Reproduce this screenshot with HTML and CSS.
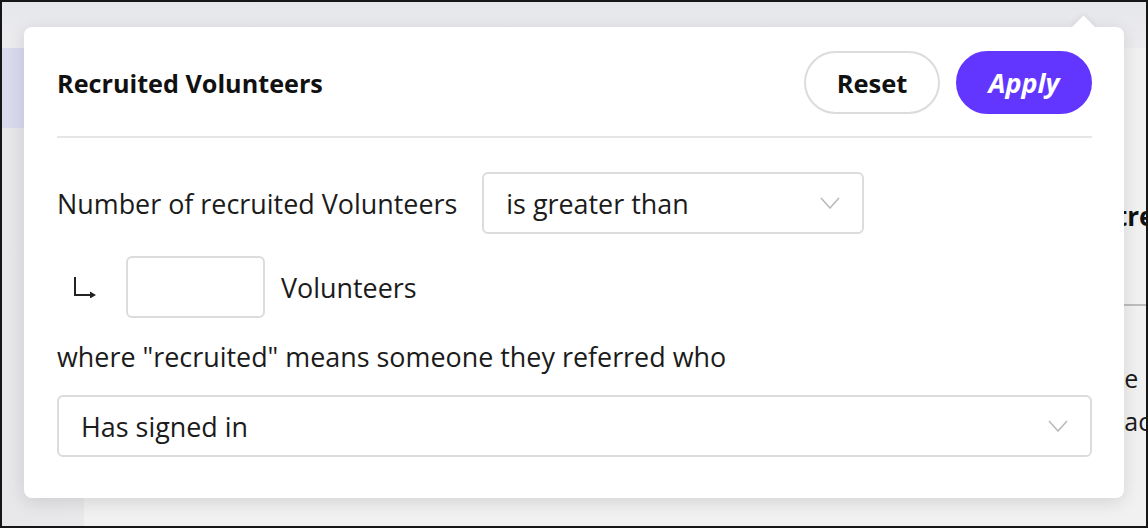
FILE: index.html
```html
<!DOCTYPE html>
<html lang="en">
<head>
<meta charset="utf-8">
<title>Recruited Volunteers filter</title>
<link rel="stylesheet" href="styles.css">
</head>
<body>
<div class="frame">
  <div class="bg">
    <div class="bg-top"></div>
    <div class="bg-body">
      <div class="bg-side"><div class="bg-side-active"></div></div>
      <div class="bg-main">
        <div class="bg-col">
          <div class="bg-heading">Centre</div>
          <div class="bg-rule"></div>
          <div class="bg-text">de<br>dac</div>
        </div>
      </div>
    </div>
  </div>

  <div class="popover">
    <div class="caret"></div>
    <div class="pop-head">
      <h2 class="pop-title">Recruited Volunteers</h2>
      <div class="pop-actions">
        <button class="btn btn-reset" type="button">Reset</button>
        <button class="btn btn-apply" type="button">Apply</button>
      </div>
    </div>
    <div class="pop-body">
      <div class="row row-cond">
        <span class="label">Number of recruited Volunteers</span>
        <div class="select select-op">
          <span>is greater than</span>
          <svg class="chev" width="20" height="12" viewBox="0 0 20 12"><polyline points="1,1 10,11 19,1" fill="none" stroke="#b8b8b8" stroke-width="1.5"/></svg>
        </div>
      </div>
      <div class="row row-count">
        <svg class="arrow" width="24" height="22" viewBox="0 0 24 22"><path d="M2 1 V19 H18" fill="none" stroke="#222" stroke-width="2"/><polygon points="17,15.5 23,19 17,22.5" fill="#222"/></svg>
        <div class="num-input"></div>
        <span class="label">Volunteers</span>
      </div>
      <p class="where">where "recruited" means someone they referred who</p>
      <div class="select select-full">
        <span>Has signed in</span>
        <svg class="chev" width="20" height="12" viewBox="0 0 20 12"><polyline points="1,1 10,11 19,1" fill="none" stroke="#b8b8b8" stroke-width="1.5"/></svg>
      </div>
    </div>
  </div>
</div>
</body>
</html>
```

FILE: styles.css
```css
* { box-sizing: border-box; }
html, body { margin: 0; padding: 0; }
body {
  width: 1148px;
  height: 528px;
  overflow: hidden;
  font-family: "Open Sans", "Noto Sans", sans-serif;
  color: #1b1b1b;
  background: #ffffff;
}
.frame {
  position: relative;
  width: 1148px;
  height: 528px;
  border: 2px solid #161616;
  overflow: hidden;
  background: #ebebee;
}
.bg { display: flex; flex-direction: column; height: 100%; }
.bg-top {
  height: 46px;
  background: linear-gradient(180deg, #e6e7eb, #ececef);
}
.bg-body { flex: 1; display: flex; }
.bg-side {
  width: 82px;
  background: linear-gradient(90deg, #e7e7ea, #e9e9ec);
}
.bg-side-active { height: 80px; background: #d9daee; }
.bg-main {
  flex: 1;
  display: flex;
  justify-content: flex-end;
  background: #f1f1f2;
}
.bg-col {
  width: 79px;
  padding-top: 153px;
  white-space: nowrap;
}
.bg-heading { font-weight: 700; font-size: 26px; line-height: 30px; color: #111; }
.bg-rule { height: 2px; background: #bdbdbd; margin-top: 73px; }
.bg-text {
  margin-top: 51px;
  padding-left: 42px;
  font-size: 25px;
  line-height: 43px;
}

.popover {
  position: absolute;
  left: 22px;
  top: 25px;
  width: 1100px;
  height: 471px;
  background: #fff;
  border-radius: 8px;
  box-shadow: 0 4px 18px rgba(0, 0, 0, 0.12);
  padding: 24px 32px 40px 33px;
}
.caret {
  position: absolute;
  top: -8px;
  right: 32px;
  width: 17px;
  height: 17px;
  background: #fff;
  transform: rotate(45deg);
  box-shadow: -2px -2px 5px rgba(0, 0, 0, 0.05);
}
.pop-head {
  position: relative;
  display: flex;
  align-items: center;
  justify-content: space-between;
  padding-bottom: 22px;
  border-bottom: 2px solid #e6e6e6;
}
.pop-title { margin: 0; font-size: 25.2px; font-weight: 700; color: #111; }
.pop-actions { display: flex; gap: 16px; }
.btn {
  height: 63px;
  width: 136px;
  border-radius: 32px;
  font-family: inherit;
  font-weight: 700;
  cursor: pointer;
  padding: 0;
}
.btn-reset { background: #fff; border: 2px solid #dcdcdc; color: #111; font-size: 25.5px; }
.btn-apply { background: #6236ff; border: 2px solid #6236ff; color: #fff; font-style: italic; font-size: 27px; }

.pop-body { display: flex; flex-direction: column; padding-top: 34px; }
.row { display: flex; align-items: center; }
.label { font-size: 26.9px; }
.row-cond { gap: 25px; }
.select {
  height: 62px;
  border: 2px solid #dcdcdc;
  border-radius: 6px;
  display: flex;
  align-items: center;
  justify-content: space-between;
  padding: 0 22px 0 22px;
  font-size: 26.9px;
}
.select-op { width: 382px; }
.row-count { margin-top: 22px; padding-left: 16px; }
.arrow { margin-right: 29px; }
.num-input {
  width: 139px;
  height: 62px;
  border: 2px solid #dcdcdc;
  border-radius: 6px;
  margin-right: 16px;
}
.where { margin: 24px 0 23px; font-size: 26.9px; line-height: 30px; }
.select-full { width: 100%; }
```
